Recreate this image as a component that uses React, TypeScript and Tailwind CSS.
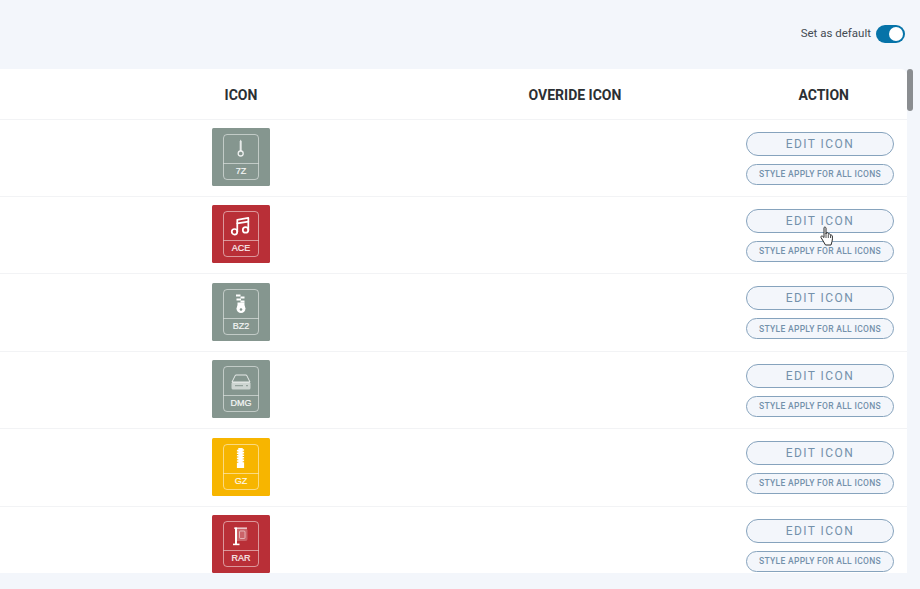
import React from "react";

type Row = { label: string; color: string; glyph: React.ReactNode };

const Key = (
  <g fill="#fff">
    <path d="M28.7 11.500l1 2v9.500h-2v-9.500z" opacity="0.8" />
    <circle cx="28.700" cy="25.500" r="2.500" fill="none" stroke="#fff" strokeOpacity="0.85" strokeWidth="1.300" />
  </g>
);
const Music = (
  <g transform="translate(17 10.200) scale(0.92)" fill="none" stroke="#fff" strokeWidth="1.900" strokeLinecap="round" strokeLinejoin="round">
    <path d="M9 18V5l12-2v13" />
    <path d="M9 9l12-2" />
    <circle cx="6" cy="18" r="3" />
    <circle cx="18" cy="16" r="3" />
  </g>
);
const Zip = (
  <g fill="#fff">
    <rect x="24" y="11.500" width="4.500" height="2" />
    <rect x="28.500" y="13.500" width="4" height="2" />
    <rect x="24.500" y="15.500" width="4.500" height="2" />
    <rect x="28.500" y="17.500" width="4" height="2" />
    <rect x="25.500" y="19.500" width="7" height="2.500" />
    <path d="M25.500 22h7l1 3.500a4.500 4.500 0 1 1-9 0z" />
    <circle cx="29" cy="26.500" r="1.300" fill="#85968f" />
  </g>
);
const Drive = (
  <g>
    <path d="M23.500 15h11l3.500 7H20z" fill="none" stroke="#fff" strokeOpacity="0.8" strokeWidth="1" strokeLinejoin="round" />
    <rect x="19.500" y="22" width="19" height="7.500" rx="1.500" fill="#fff" opacity="0.6" />
    <rect x="23" y="25.200" width="8" height="1" fill="#85968f" />
    <rect x="34" y="25.200" width="2" height="1" fill="#85968f" />
  </g>
);
const Zipper = (
  <path
    fill="#fff"
    d="M26.300 10h4.400v1.200h1.400v1.600h-1.400v1h1.400v1.600h-1.400v1h1.400v1.600h-1.400v1h1.400v1.600h-1.400v1h1.400v1.600h-1.400v1h1.400V30H24.900v-5.200h1.400v-1h-1.400v-1.600h1.400v-1h-1.400v-1.600h1.400v-1h-1.400v-1.600h1.400v-1h-1.400v-1.600h1.400v-1h-1.400v-1.600h1.400z"
  />
);
const Flag = (
  <g>
    <rect x="23" y="12.500" width="2" height="17.500" fill="#fff" />
    <rect x="22" y="12.500" width="13" height="1.300" fill="#fff" opacity="0.85" />
    <rect x="21" y="28.600" width="6.500" height="1.600" fill="#fff" />
    <path d="M25 13.500h8.500a2 2 0 0 1 2 2v8.500a2 2 0 0 1-2 2H25z" fill="#fff" opacity="0.25" />
    <rect x="27.500" y="16" width="5.500" height="7.500" rx="1" fill="none" stroke="#fff" strokeOpacity="0.5" strokeWidth="1" />
  </g>
);

const rows: Row[] = [
  { label: "7Z", color: "#85968f", glyph: Key },
  { label: "ACE", color: "#b92f37", glyph: Music },
  { label: "BZ2", color: "#85968f", glyph: Zip },
  { label: "DMG", color: "#85968f", glyph: Drive },
  { label: "GZ", color: "#f7b500", glyph: Zipper },
  { label: "RAR", color: "#b92f37", glyph: Flag },
];

function FileIcon({ label, color, glyph }: Row) {
  return (
    <svg width="58" height="58" viewBox="0 0 58 58" className="block">
      <rect width="58" height="58" rx="1.500" fill={color} />
      <rect x="11.500" y="6.500" width="35" height="45" rx="3.500" fill="none" stroke="#fff" strokeOpacity="0.5" strokeWidth="1" />
      <line x1="11.500" y1="35.500" x2="46.500" y2="35.500" stroke="#fff" strokeOpacity="0.5" strokeWidth="1" />
      {glyph}
      <text x="29" y="46" textAnchor="middle" fill="#fff" fontSize="9" fontWeight="400" stroke="#fff" strokeWidth="0.2" fontFamily="'Liberation Sans', Arial, sans-serif" opacity="0.92">
        {label}
      </text>
    </svg>
  );
}

export default function App() {
  return (
    <div className="relative h-[589px] w-[920px] overflow-hidden bg-[#f3f6fb] font-['Roboto',sans-serif]">
      <div className="flex h-[69px] items-center justify-end gap-[5px] pr-[15px] pb-[1px]">
        <span className="text-[11.5px] text-[#444b53]">Set as default</span>
        <div className="flex h-[18px] w-[29px] items-center justify-end rounded-full bg-[#0673a8] pr-[2px]">
          <div className="h-[14px] w-[14px] rounded-full bg-white" />
        </div>
      </div>

      <div className="h-[504px] w-[907px] overflow-hidden rounded-tr-[6px] bg-white">
        <div className="grid h-[50.5px] grid-cols-[482px_186px_1fr] items-center border-b border-[#f2f3f5] pt-[3px] text-[14px] font-bold text-[#2b2f33]">
          <div className="text-center">ICON</div>
          <div className="text-center">OVERIDE ICON</div>
          <div className="pr-[58px] text-right">ACTION</div>
        </div>
        {rows.map((r) => (
          <div
            key={r.label}
            className="grid h-[77.45px] grid-cols-[482px_186px_1fr] items-start border-b border-[#f2f3f5]"
          >
            <div className="flex justify-center pt-[8.25px]">
              <FileIcon {...r} />
            </div>
            <div />
            <div className="flex flex-col items-end gap-[8px] pt-[12px] pr-[13px]">
              <div className="flex h-[24px] w-[148px] items-center justify-center rounded-full border border-[#86a3bd] bg-[#f3f6fb] text-[12px] font-normal tracking-[1.45px] text-[#7491ab]">
                EDIT ICON
              </div>
              <div className="flex h-[21px] w-[148px] items-center justify-center rounded-full border border-[#86a3bd] bg-[#f3f6fb] text-[8.5px] font-medium tracking-[0.3px] text-[#7491ab]">
                STYLE APPLY FOR ALL ICONS
              </div>
            </div>
          </div>
        ))}
      </div>

      <div className="absolute top-[69px] left-[907px] h-[42px] w-[6px] rounded-full bg-[#8a8d90]" />

      <svg className="absolute top-[226px] left-[820px]" width="15" height="21" viewBox="0 0 15 21">
        <path
          d="M4 1.500c.8-.8 1.800-.4 2 .6V8l.2-1c.6-.8 1.700-.6 2 .2l.2 1c.5-.7 1.600-.5 1.900.3l.2.8c.6-.5 1.600-.2 1.800.6.3 2 .2 4-.3 5.500l-1 3.600H5.500L2.500 14 1 11.500c-.4-1 .6-2 1.500-1.300L4 11.500z"
          fill="#fff"
          stroke="#2a2a2a"
          strokeWidth="1"
          strokeLinejoin="round"
        />
        <path d="M6 8v4M8.300 8.500v3.500M10.500 9.500V12" stroke="#2a2a2a" strokeWidth="0.8" />
      </svg>
    </div>
  );
}
